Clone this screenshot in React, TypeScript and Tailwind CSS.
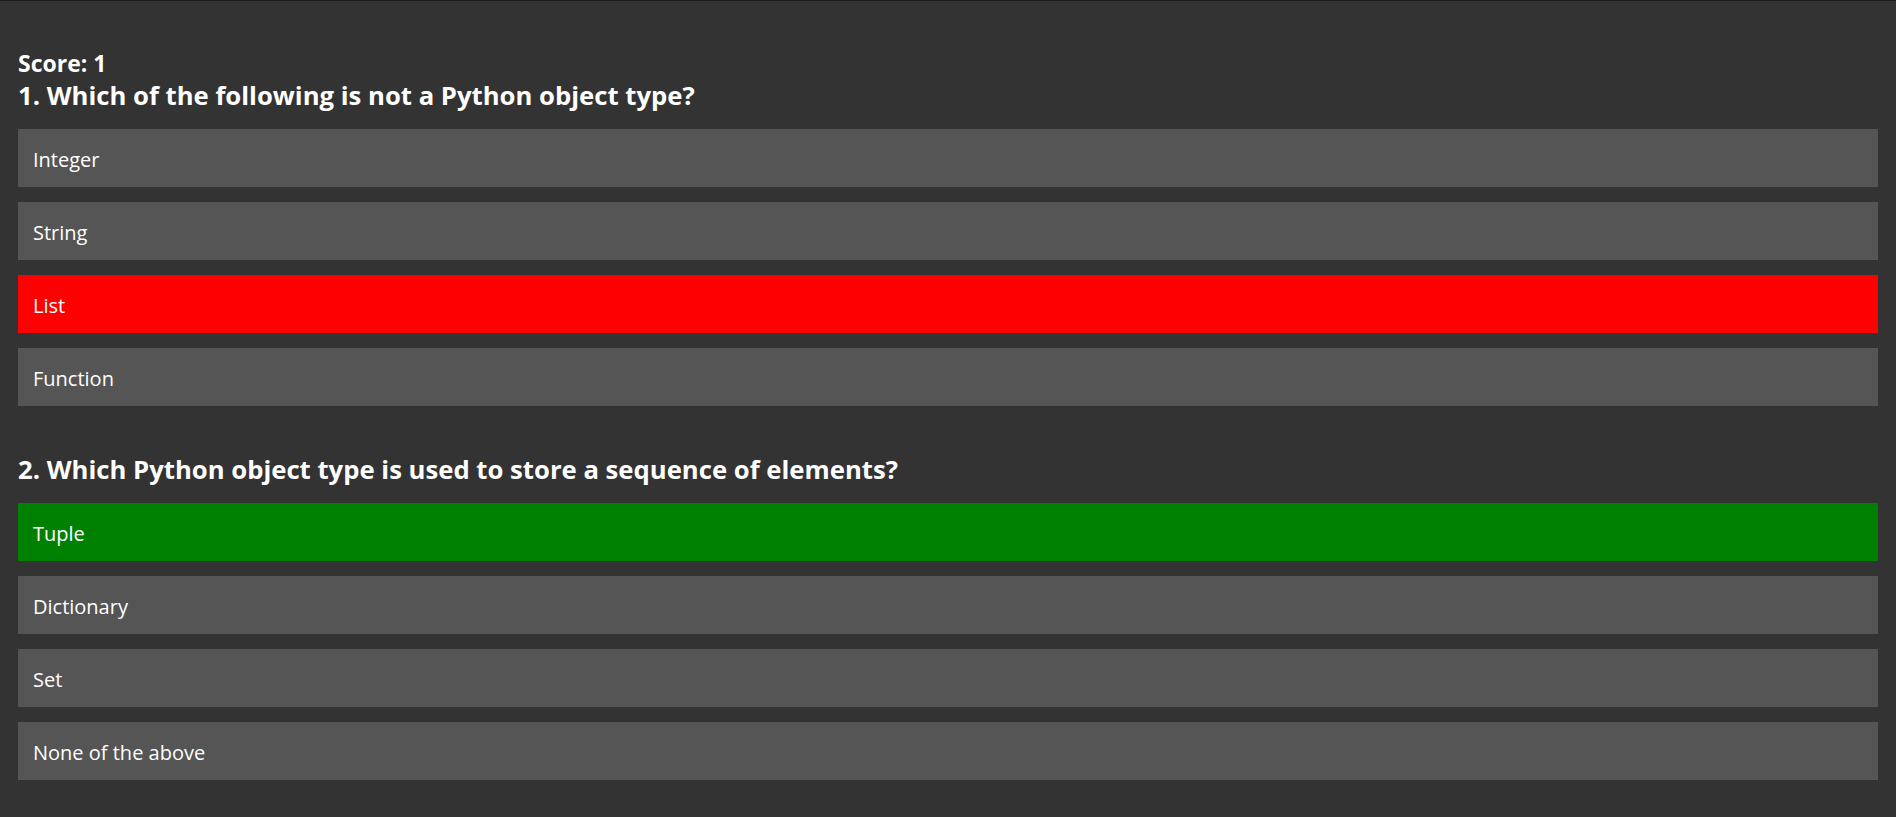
import React from "react";

type Opt = { label: string; state?: "wrong" | "right" };

const q1: Opt[] = [
  { label: "Integer" },
  { label: "String" },
  { label: "List", state: "wrong" },
  { label: "Function" },
];
const q2: Opt[] = [
  { label: "Tuple", state: "right" },
  { label: "Dictionary" },
  { label: "Set" },
  { label: "None of the above" },
];

function Option({ o }: { o: Opt }) {
  const bg =
    o.state === "wrong"
      ? "bg-[#ff0000]"
      : o.state === "right"
      ? "bg-[#008000]"
      : "bg-[#555555]";
  return (
    <div
      className={`${bg} h-[58px] px-[15px] pt-[18px] text-[20px] leading-[26px] text-white`}
    >
      {o.label}
    </div>
  );
}

function Question({ title, opts, className }: { title: string; opts: Opt[]; className: string }) {
  return (
    <div className={className}>
      <h2 className="text-[25.7px] leading-[30px] font-bold text-white mb-[18px]">{title}</h2>
      <div className="flex flex-col gap-[15px]">
        {opts.map((o) => (
          <Option key={o.label} o={o} />
        ))}
      </div>
    </div>
  );
}

export default function App() {
  return (
    <div
      className="min-h-screen bg-[#333333] border-t border-[#1a1a1a]"
      style={{ fontFamily: '"Open Sans", "Noto Sans", sans-serif' }}
    >
      <div className="px-[18px] pt-[48px] pb-[38px]">
        <div className="text-[23px] leading-[28px] font-bold text-white">Score: 1</div>
        <Question
          className="mt-[4px]"
          title="1. Which of the following is not a Python object type?"
          opts={q1}
        />
        <Question
          className="mt-[49px]"
          title="2. Which Python object type is used to store a sequence of elements?"
          opts={q2}
        />
      </div>
    </div>
  );
}
